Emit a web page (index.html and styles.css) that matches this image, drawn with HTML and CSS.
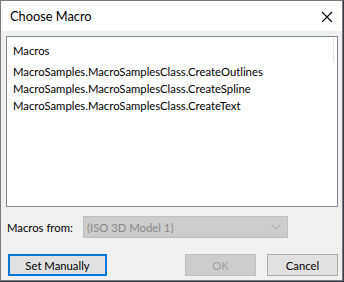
FILE: index.html
```html
<!DOCTYPE html>
<html>
<head>
    <meta charset="UTF-8">
    <title>Choose Macro</title>
    <link rel="stylesheet" href="styles.css">
</head>
<body>
    <div class="window">
        <div class="titlebar">
            <span class="title">Choose Macro</span>
            <svg class="close" width="12" height="12" viewBox="0 0 12 12">
                <path d="M1 1 L11 11 M11 1 L1 11" stroke="#000" stroke-width="1.1" fill="none"/>
            </svg>
        </div>
        <div class="client">
            <div class="listbox">
                <div class="list-header">
                    <span>Macros</span>
                    <span class="divider"></span>
                </div>
                <div class="item">MacroSamples.MacroSamplesClass.CreateOutlines</div>
                <div class="item">MacroSamples.MacroSamplesClass.CreateSpline</div>
                <div class="item">MacroSamples.MacroSamplesClass.CreateText</div>
            </div>
            <div class="source-row">
                <span class="label">Macros from:</span>
                <div class="combo">
                    <span>(ISO 3D Model 1)</span>
                    <svg width="10" height="6" viewBox="0 0 10 6">
                        <path d="M0.5 0.5 L5 5 L9.5 0.5" stroke="#a8a8a8" fill="none"/>
                    </svg>
                </div>
            </div>
            <div class="buttons">
                <button class="btn btn-default">Set Manually</button>
                <div class="spacer"></div>
                <button class="btn btn-disabled">OK</button>
                <button class="btn">Cancel</button>
            </div>
        </div>
    </div>
</body>
</html>
```

FILE: styles.css
```css
body { margin: 0; background: #3a3c4c; font-family: Lato, "Noto Sans", sans-serif; font-size: 11.3px; color: #000; }
.window { width: 341px; height: 279px; border: 1px solid #7a7a7a; background: #f0f0f0; display: flex; flex-direction: column; }
.titlebar { height: 30px; background: #fff; display: flex; align-items: center; justify-content: space-between; padding: 0 9px 0 9px; }
.title { font-size: 12.8px; }
.close { margin-top: 1px; }
.client { flex: 1; display: flex; flex-direction: column; padding: 5px 4px 0 5px; }
.listbox { height: 169px; border: 1px solid #828790; background: #fff; padding: 0 0 0 6px; }
.list-header { height: 26px; display: flex; align-items: center; justify-content: space-between; }
.divider { width: 1px; height: 24px; background: #e5e5e5; margin-right: 3px; align-self: flex-start; margin-top: 1px; }
.item { height: 17px; line-height: 17px; white-space: nowrap; }
.source-row { display: flex; align-items: center; margin-top: 9px; padding-left: 1px; }
.label { width: 76px; }
.combo { border: 1px solid #bfbfbf; background: #cccccc; color: #8a8a8a; display: flex; align-items: center; justify-content: space-between; padding: 0 6px 0 3px; box-sizing: border-box; width: 205px; height: 22px; }
.buttons { display: flex; align-items: center; margin-top: 16px; gap: 11px; padding-left: 2px; }
.spacer { flex: 1; }
.btn { font-family: inherit; font-size: 11.3px; width: 71px; height: 22px; border: 1px solid #adadad; background: #e1e1e1; color: #000; padding: 0; margin: 0; }
.btn-default { width: 99px; border: 2px solid #0078d7; }
.btn-disabled { border-color: #bfbfbf; background: #cccccc; color: #a0a0a0; }
```
